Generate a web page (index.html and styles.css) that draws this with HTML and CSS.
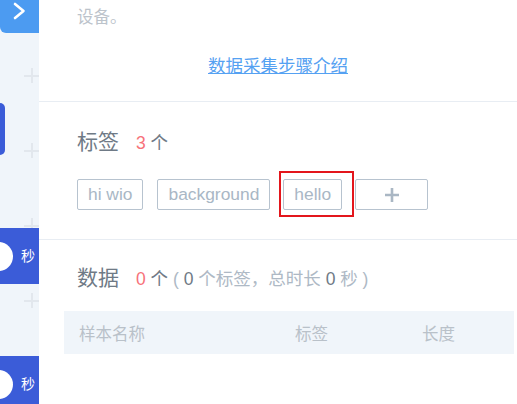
FILE: index.html
```html
<!DOCTYPE html>
<html lang="zh">
<head>
<meta charset="utf-8">
<link rel="stylesheet" href="styles.css">
</head>
<body>
<div class="page">
  <aside class="sidebar">
    <div class="plus-col">
      <span class="plus"></span>
      <span class="plus"></span>
      <span class="plus"></span>
      <span class="plus"></span>
    </div>
    <div class="clip-col">
      <div class="toggle-btn">
        <svg width="39" height="33" viewBox="0 0 39 33"><polyline points="15,4 23.5,11 15,18" fill="none" stroke="#fff" stroke-width="2.6" stroke-linecap="round" stroke-linejoin="round"/></svg>
      </div>
      <div class="clip clip-edge"></div>
      <div class="clip clip-full"><span class="knob"></span><span class="unit">秒</span></div>
      <div class="clip clip-full"><span class="knob"></span><span class="unit">秒</span></div>
    </div>
  </aside>
  <main class="panel">
    <section class="intro">
      <p class="desc">设备。</p>
      <p class="link-row"><a class="guide-link" href="#">数据采集步骤介绍</a></p>
    </section>
    <section class="tags-section">
      <h2 class="title">标签<span class="meta"><span class="num-red">3</span> 个</span></h2>
      <div class="tags">
        <span class="tag">hi wio</span>
        <span class="tag">background</span>
        <span class="tag tag-hl">hello<span class="hl-box"></span></span>
        <span class="tag tag-add"><svg width="16" height="16" viewBox="0 0 16 16"><path d="M8 1v14M1 8h14" stroke="#aab7c4" stroke-width="2.6"/></svg></span>
      </div>
    </section>
    <section class="data-section">
      <h2 class="title">数据<span class="meta"><span class="num-red">0</span> 个<span class="light"> ( </span><span class="dark">0</span><span class="light"> 个标签，总时长 </span><span class="dark">0</span><span class="light"> 秒 )</span></span></h2>
      <div class="table-head">
        <span>样本名称</span>
        <span>标签</span>
        <span>长度</span>
      </div>
    </section>
  </main>
</div>
</body>
</html>
```

FILE: styles.css
```css
* { box-sizing: border-box; margin: 0; padding: 0; }
html, body { width: 517px; height: 404px; overflow: hidden; }
body {
  font-family: "Liberation Sans", "Noto Sans CJK SC", sans-serif;
  background: #fff;
}
.page { display: flex; height: 404px; }

.sidebar {
  width: 39px;
  flex: none;
  background: #f0f5fa;
  display: grid;
  overflow: hidden;
}
.plus-col, .clip-col { grid-area: 1 / 1; display: flex; flex-direction: column; }
.plus-col { align-items: flex-end; padding-top: 68px; }
.plus {
  display: block;
  width: 15px;
  height: 15px;
  margin-bottom: 60px;
  background:
    linear-gradient(#e2e7ed, #e2e7ed) center / 15px 2px no-repeat,
    linear-gradient(#e2e7ed, #e2e7ed) center / 2px 15px no-repeat;
}
.clip-col { z-index: 1; }
.toggle-btn {
  height: 33px;
  width: 39px;
  background: #4c9bf1;
  border-bottom-left-radius: 6px;
}
.toggle-btn svg { display: block; }
.clip { background: #3b5cd8; }
.clip-edge {
  margin-top: 70px;
  width: 5px;
  height: 52px;
  border-radius: 0 5px 5px 0;
}
.clip-full {
  width: 39px;
  height: 56px;
  display: flex;
  align-items: center;
  overflow: hidden;
}
.clip-edge + .clip-full { margin-top: 73px; }
.clip-full + .clip-full { margin-top: 72px; }
.knob {
  flex: none;
  width: 29px;
  height: 29px;
  border-radius: 50%;
  background: #fff;
  margin-left: -16px;
}
.unit {
  color: #fff;
  font-size: 14px;
  margin-left: 8px;
  line-height: 16px;
}

.panel { flex: 1; background: #fff; min-width: 0; }

.intro {
  height: 102px;
  border-bottom: 1px solid #e8edf3;
}
.desc {
  padding: 5px 0 0 38px;
  font-size: 16.5px;
  line-height: 24px;
  color: #bcc3cb;
}
.link-row {
  margin-top: 25px;
  text-align: center;
  font-size: 17.5px;
  line-height: 24px;
}
.guide-link { color: #55a1f2; text-decoration: underline; }

.title {
  font-weight: normal;
  font-size: 21px;
  line-height: 28px;
  color: #6f7a86;
  display: flex;
  align-items: baseline;
}
.meta { font-size: 17.5px; margin-left: 17px; color: #6f7a86; white-space: pre; }
.num-red { color: #f7727a; }
.light { color: #aeb9c5; }
.dark { color: #6f7a86; }

.tags-section {
  padding: 26px 0 27px 38px;
  border-bottom: 1px solid #e8edf3;
}
.tags { display: flex; gap: 13px; margin-top: 22px; padding-bottom: 2px; }
.tags .tag:first-child { margin-right: 1px; }
.tag {
  position: relative;
  height: 31px;
  padding: 0 10px;
  border: 1px solid #b7c3cf;
  border-radius: 2px;
  font-size: 17.4px;
  line-height: 29px;
  color: #a9b7c5;
}
.tag-add {
  width: 73px;
  display: flex;
  align-items: center;
  justify-content: center;
}
.tag-add svg { display: block; }
.hl-box {
  position: absolute;
  left: -5px;
  top: -9px;
  width: 75px;
  height: 46px;
  border: 2px solid #e3161c;
}

.data-section { padding: 24px 0 0 38px; }
.table-head {
  margin: 18px 3px 0 -13px;
  height: 43px;
  background: #f0f5fa;
  display: grid;
  grid-template-columns: 216px 127px 1fr;
  align-items: center;
  padding-left: 15px;
  font-size: 16.5px;
  color: #b9c1c9;
}
```
